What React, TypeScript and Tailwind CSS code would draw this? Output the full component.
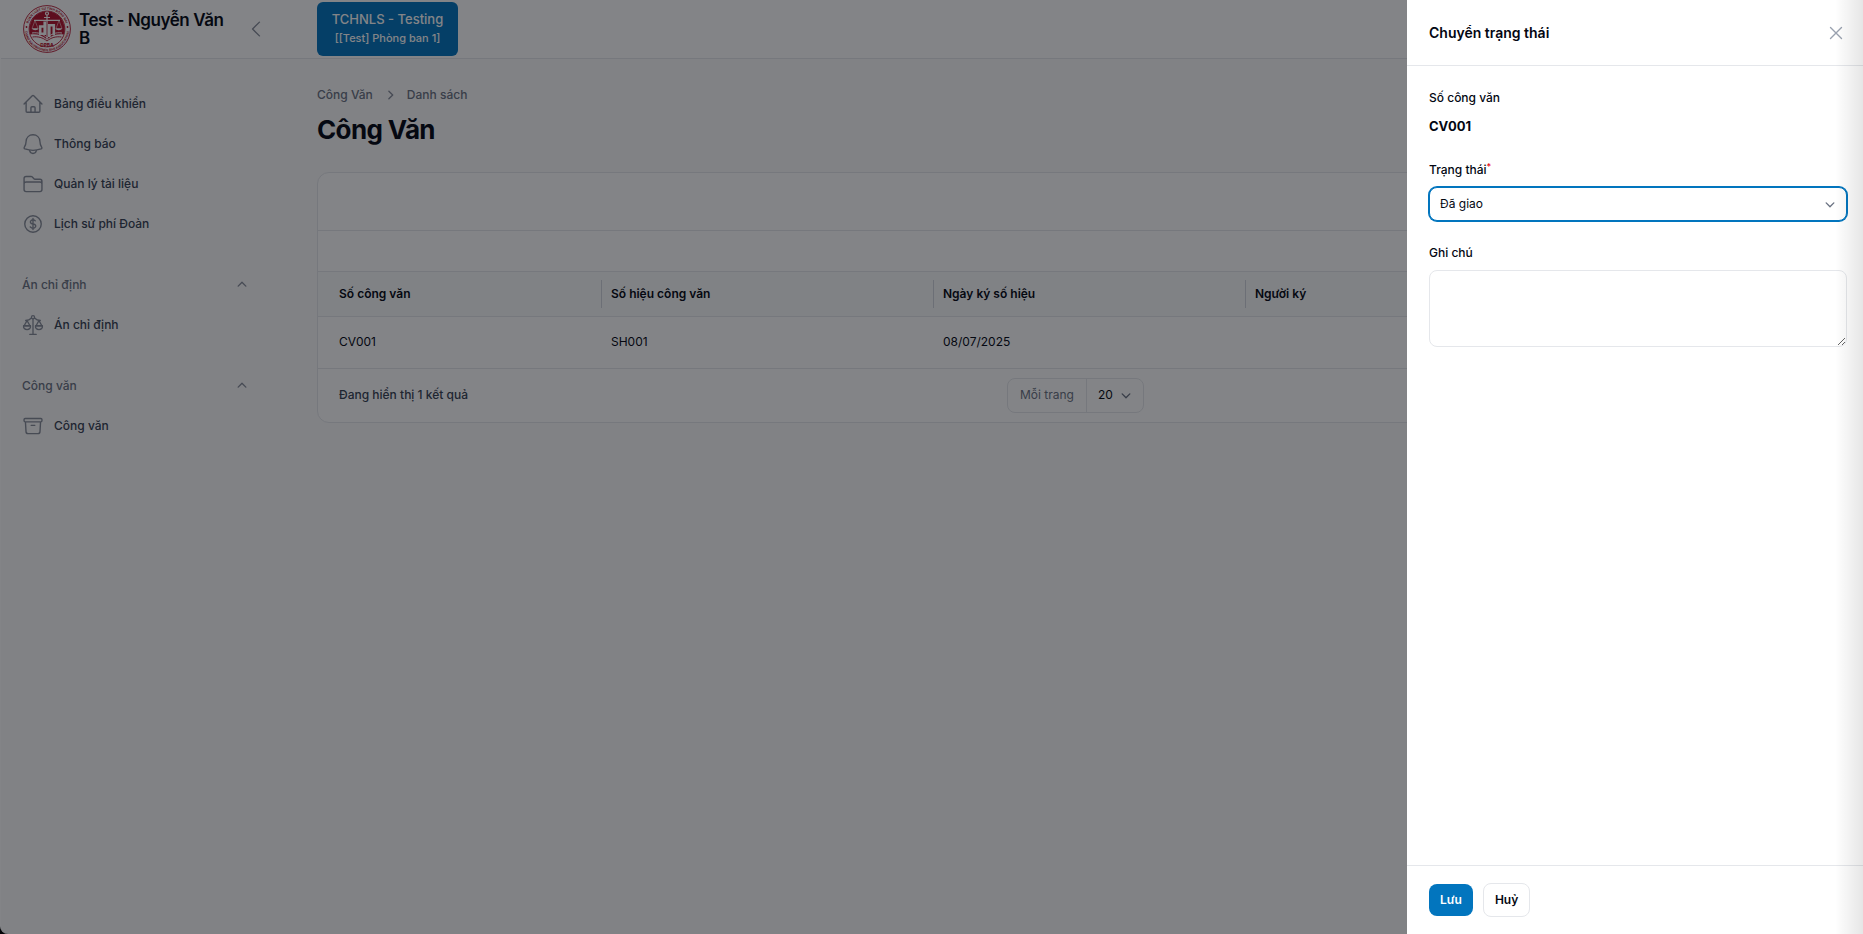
import type { ReactNode } from 'react';
import {
  HiOutlineHome,
  HiOutlineFolder,
  HiOutlineCurrencyDollar,
  HiOutlineArchiveBox,
  HiOutlineChevronLeft,
  HiOutlineXMark,
  HiMiniChevronDown,
  HiMiniChevronRight,
  HiMiniChevronUp,
} from 'react-icons/hi2';

const BellIcon = () => (
  <svg viewBox="0 0 24 24" fill="none" stroke="currentColor" strokeWidth="1.5" strokeLinecap="round" strokeLinejoin="round" className="size-[22px]">
    <path d="M12 1.900C7.600 1.900 4.700 5 4.500 9c-.1 2.800-.7 4.500-1.900 6.300-.6.900-.3 1.700.7 2.100 5.600 2 11.800 2 17.400 0 1-.4 1.300-1.200.7-2.100C20.200 13.500 19.600 11.800 19.500 9c-.2-4-3.100-7.100-7.500-7.100z" />
    <path d="M8.300 19.300c.5 1.900 1.900 3 3.700 3s3.200-1.100 3.700-3" />
  </svg>
);

const ScaleIcon = () => (
  <svg viewBox="0 0 24 24" fill="none" stroke="currentColor" strokeWidth="1.400" strokeLinecap="round" strokeLinejoin="round" className="size-[22px]">
    <circle cx="12" cy="3.500" r="1.700" />
    <path d="M12 5.200v17M8.500 22.300h7M10.300 4.300C8.700 6 7 6.900 4 7.100M13.700 4.300C15.300 6 17 6.900 20 7.100" />
    <path d="M5.500 7.200 2.300 12.800h6.400zM18.500 7.200l-3.200 5.600h6.400z" />
    <path d="M1.700 12.800h7.600c.4 2.600-1.300 4.200-3.800 4.200s-4.200-1.600-3.800-4.200zM14.700 12.800h7.600c.4 2.600-1.300 4.200-3.800 4.200s-4.200-1.600-3.800-4.200z" />
  </svg>
);

const Logo = () => (
  <svg viewBox="0 0 48 48" className="size-12 shrink-0" aria-label="DPBA">
    <defs>
      <path id="ring-top" d="M4.600 24a19.400 19.400 0 0 1 38.800 0" />
      <path id="ring-bottom" d="M1.800 24a22.200 22.200 0 0 0 44.400 0" />
    </defs>
    <circle cx="24" cy="24" r="23.400" fill="#fff" stroke="#b3122d" strokeWidth="0.900" />
    <circle cx="24" cy="24" r="17.900" fill="#fff" stroke="#b3122d" strokeWidth="0.900" />
    <path d="M7.300 29.500a17.600 17.600 0 1 1 33.400 0c-6-1-12 .5-16.700 5-4.700-4.500-10.700-6-16.700-5z" fill="#b3122d" />
    <g fill="none" stroke="#fff" strokeWidth="1.200">
      <circle cx="24" cy="8.500" r="1.500" />
      <path d="M24 10v24M11 15.300h26M21 12.500h6" />
      <path d="m12 15.500-3 8h6zM36 15.500l-3 8h6z" strokeWidth="0.500" />
    </g>
    <path d="M9 23.500h6.500c-.5 2.200-6 2.200-6.500 0zM32.500 23.500H39c-.5 2.200-6 2.200-6.500 0z" fill="#fff" />
    <g fill="none" stroke="#fff" strokeWidth="2.600">
      <path d="M21.700 16.500v12.200h-4.500v-7.200h4.500M26.300 32V20.300h4.500v10" />
    </g>
    <path d="M9 28c6-1 11 1 15 5 4-4 9-6 15-5" fill="none" stroke="#fff" strokeWidth="1" />
    <path d="M9.500 32c5-.8 10.500.5 14.500 4 4-3.500 9.500-4.800 14.500-4" fill="none" stroke="#b3122d" strokeWidth="0.900" />
    <text x="24" y="41.500" textAnchor="middle" fontSize="4.800" fontWeight="800" fill="#b3122d">DPBA</text>
    <g fill="#b3122d" fontSize="3.200" fontWeight="700" textAnchor="middle">
      <text><textPath href="#ring-top" startOffset="50%">ĐOÀN LUẬT SƯ TỈNH ĐỒNG NAI</textPath></text>
      <text><textPath href="#ring-bottom" startOffset="50%">DONG NAI PROVINCE BAR ASSOCIATION</textPath></text>
    </g>
    <circle cx="3.500" cy="22" r="0.900" fill="#b3122d" />
    <circle cx="44.500" cy="22" r="0.900" fill="#b3122d" />
  </svg>
);

const NavItem = ({ icon, children }: { icon: ReactNode; children: ReactNode }) => (
  <a href="#" className="flex h-10 items-center gap-2.5 text-xs font-medium text-gray-700">
    <span className="text-[#868c99]">{icon}</span>
    {children}
  </a>
);

const NavGroup = ({ label, children }: { label: string; children: ReactNode }) => (
  <div className="mt-[21px]">
    <button type="button" className="flex h-10 w-full items-center justify-between text-xs font-medium text-gray-500">
      {label}
      <HiMiniChevronUp className="mr-1 size-[18px] text-[#868c99]" />
    </button>
    {children}
  </div>
);

const columns = [
  { label: 'Số công văn', width: 'w-[283px]' },
  { label: 'Số hiệu công văn', width: 'w-[332px]' },
  { label: 'Ngày ký số hiệu', width: 'w-[312px]' },
  { label: 'Người ký', width: '' },
];

const rows = [['CV001', 'SH001', '08/07/2025', '']];

function Sidebar() {
  return (
    <aside className="w-[287px] shrink-0">
      <div className="flex h-[59px] items-center gap-2 border-b border-gray-200 bg-white pl-[22px]">
        <Logo />
        <span className="w-[158px] text-[17px]/[18px] font-semibold tracking-tight text-gray-950">Test - Nguyễn Văn B</span>
        <button type="button" aria-label="Thu gọn" className="text-[#868c99]">
          <HiOutlineChevronLeft className="size-[22px]" />
        </button>
      </div>
      <nav className="pt-[25px] pr-[33px] pl-[21px]">
        <NavItem icon={<HiOutlineHome className="size-[22px]" />}>Bảng điều khiển</NavItem>
        <NavItem icon={<BellIcon />}>Thông báo</NavItem>
        <NavItem icon={<HiOutlineFolder className="size-[22px]" />}>Quản lý tài liệu</NavItem>
        <NavItem icon={<HiOutlineCurrencyDollar className="size-[22px]" />}>Lịch sử phí Đoàn</NavItem>
        <NavGroup label="Án chỉ định">
          <NavItem icon={<ScaleIcon />}>Án chỉ định</NavItem>
        </NavGroup>
        <NavGroup label="Công văn">
          <NavItem icon={<HiOutlineArchiveBox className="size-[22px]" />}>Công văn</NavItem>
        </NavGroup>
      </nav>
    </aside>
  );
}

function DocumentsTable() {
  return (
    <section className="mt-6 overflow-hidden rounded-xl border border-gray-200 bg-white">
      <div className="h-[58px] border-b border-gray-200" />
      <div className="h-[41px] border-b border-gray-200" />
      <table className="w-full table-fixed text-left text-xs text-gray-950">
        <thead className="bg-gray-50">
          <tr className="h-11 border-b border-gray-200">
            {columns.map((col, i) => (
              <th key={col.label} className={`p-0 font-semibold ${col.width}`}>
                <div className={i === 0 ? 'pl-[21px]' : 'flex h-7 items-center border-l border-gray-300 pl-[9px]'}>
                  {col.label}
                </div>
              </th>
            ))}
          </tr>
        </thead>
        <tbody>
          {rows.map((row) => (
            <tr key={row[0]} className="h-[52px] border-b border-gray-200">
              {row.map((cell, i) => (
                <td key={i} className={i === 0 ? 'p-0 pl-[21px]' : 'p-0 pl-2.5'}>{cell}</td>
              ))}
            </tr>
          ))}
        </tbody>
      </table>
      <div className="grid h-[53px] grid-cols-[1fr_auto_1fr] items-center px-[21px] text-xs">
        <span className="font-medium text-gray-700">Đang hiển thị 1 kết quả</span>
        <div className="flex h-[35px] items-center rounded-lg border border-gray-200">
          <label htmlFor="per-page" className="px-3 text-gray-500">Mỗi trang</label>
          <div className="relative h-full border-l border-gray-200">
            <select id="per-page" defaultValue="20" className="h-full w-14 appearance-none bg-transparent pl-[11px] text-gray-950">
              <option>10</option>
              <option>20</option>
              <option>50</option>
            </select>
            <HiMiniChevronDown className="pointer-events-none absolute top-[7px] right-2 size-[18px] text-gray-500" />
          </div>
        </div>
      </div>
    </section>
  );
}

function StatusPanel() {
  return (
    <div role="dialog" aria-labelledby="panel-title" className="fixed inset-y-0 right-0 flex w-[456px] flex-col bg-white text-xs text-gray-950">
      <header className="flex h-[66px] items-center justify-between border-b border-gray-200 pr-4 pl-[22px]">
        <h2 id="panel-title" className="text-sm font-semibold">Chuyển trạng thái</h2>
        <button type="button" aria-label="Đóng" className="text-gray-400">
          <HiOutlineXMark className="size-[22px]" />
        </button>
      </header>
      <form id="status-form" className="flex flex-1 flex-col pt-[22px] pr-4 pl-[22px]">
        <span className="leading-5 font-medium">Số công văn</span>
        <span className="mt-2 mb-6 text-[13px] leading-5 font-bold">CV001</span>
        <label htmlFor="status" className="leading-5 font-medium">
          Trạng thái<sup className="leading-0 text-red-600">*</sup>
        </label>
        <div className="relative mt-[7px] mb-[22px]">
          <select id="status" defaultValue="Đã giao" className="block h-[34px] w-full appearance-none rounded-lg border border-[#0275be] bg-white px-2.5 ring-1 ring-[#0275be] outline-none">
            <option>Đã giao</option>
            <option>Đang xử lý</option>
          </select>
          <HiMiniChevronDown className="pointer-events-none absolute top-2 right-2 size-[18px] text-gray-500" />
        </div>
        <label htmlFor="note" className="leading-5 font-medium">Ghi chú</label>
        <textarea id="note" className="mt-[7px] h-[77px] rounded-lg border border-gray-200 px-2.5 py-1.5 outline-none" />
      </form>
      <footer className="flex h-[69px] items-center gap-2.5 border-t border-gray-200 pl-[22px] font-semibold">
        <button type="submit" form="status-form" className="h-8 rounded-lg bg-[#0275be] px-[11px] text-white">Lưu</button>
        <button type="button" className="h-[34px] rounded-lg border border-gray-200 px-[11px]">Huỷ</button>
      </footer>
      <div className="pointer-events-none absolute inset-y-0 right-0 w-7 bg-linear-to-l from-black/10 to-transparent" />
    </div>
  );
}

export default function App() {
  return (
    <div className="min-h-screen bg-black font-['Inter',sans-serif]">
      <div className="flex min-h-screen overflow-hidden rounded-bl-lg border-l border-white bg-[#fafafa]">
        <Sidebar />
        <div className="min-w-0 flex-1">
          <header className="flex h-[59px] items-start border-b border-gray-200 bg-white pt-0.5 pl-[29px]">
            <button type="button" className="h-[54px] w-[141px] rounded-md bg-[#0275be] text-[13px] font-medium text-white">
              <span className="block leading-[18px]">TCHNLS - Testing</span>
              <span className="block text-[11px] leading-5">[[Test] Phòng ban 1]</span>
            </button>
          </header>
          <main className="px-[29px] pt-[26px]">
            <nav className="flex items-center gap-2 text-xs/5 font-medium text-gray-500">
              <a href="#">Công Văn</a>
              <HiMiniChevronRight className="size-[18px] text-[#868c99]" />
              <a href="#">Danh sách</a>
            </nav>
            <h1 className="mt-[7px] text-[26px]/9 font-bold tracking-tight text-gray-950">Công Văn</h1>
            <DocumentsTable />
          </main>
        </div>
      </div>
      <div className="fixed inset-0 bg-[#070910]/50" />
      <StatusPanel />
    </div>
  );
}
